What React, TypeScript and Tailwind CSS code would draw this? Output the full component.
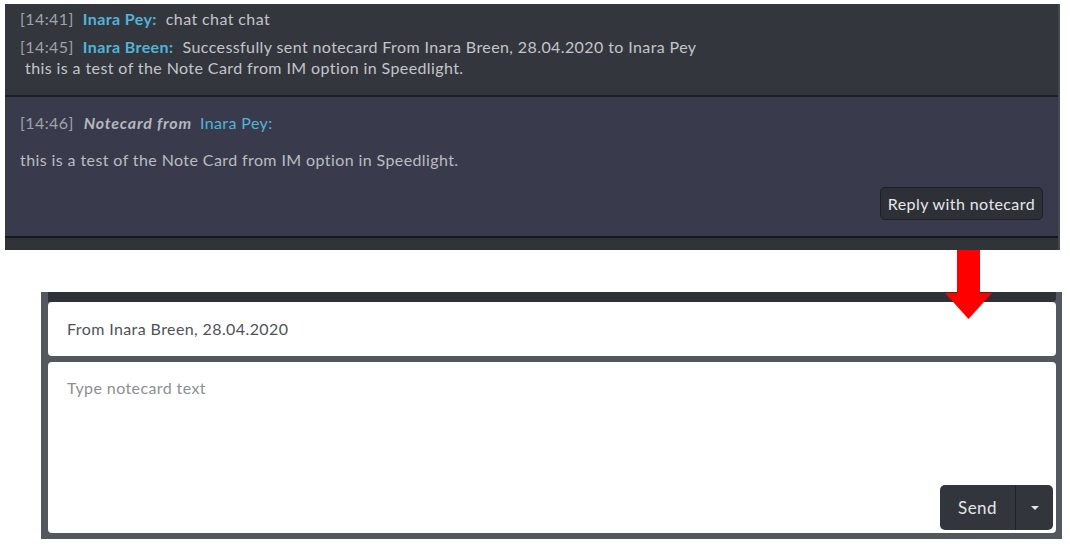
import { ChevronDown } from "lucide-react"

const font = { fontFamily: "Lato, 'Noto Sans', sans-serif" }

function ChatLine({ time, name, children }: { time: string; name: string; children: React.ReactNode }) {
  return (
    <div className="leading-[21px]">
      <span className="text-[#9fa3a8]">[{time}]</span>
      <span className="ml-[9px] font-bold text-[#52b3d9]">{name}:</span>
      <span className="ml-[9px] text-[#c3c5c8]">{children}</span>
    </div>
  )
}

export default function App() {
  return (
    <div className="relative h-[548px] w-[1070px] overflow-hidden bg-white text-[16px] tracking-[0.4px]" style={font}>
      {/* chat history */}
      <div className="ml-[5px] mt-[4px] w-[1055px] border-r-2 border-[#45484e]">
        <div className="flex flex-col gap-[7px] bg-[#33363d] px-[15px] pb-[17px] pt-[4px]">
          <ChatLine time="14:41" name="Inara Pey">chat chat chat</ChatLine>
          <div>
            <ChatLine time="14:45" name="Inara Breen">
              Successfully sent notecard From Inara Breen, 28.04.2020 to Inara Pey
            </ChatLine>
            <div className="pl-[5px] leading-[21px] text-[#c3c5c8]">
              this is a test of the Note Card from IM option in Speedlight.
            </div>
          </div>
        </div>
        <div className="border-t-2 border-[#1d1f24] bg-[#393b4c] px-[15px] pb-[16px] pt-[15px]">
          <div className="leading-[21px]">
            <span className="text-[#9fa3a8]">[14:46]</span>
            <span className="ml-[10px] font-bold italic tracking-[0.8px] text-[#b4b7bc]">Notecard from</span>
            <span className="ml-[8px] text-[#52b3d9]">Inara Pey:</span>
          </div>
          <div className="mt-[16px] leading-[21px] text-[#b9bcc0]">
            this is a test of the Note Card from IM option in Speedlight.
          </div>
          <div className="mt-[17px] flex justify-end">
            <button className="h-[33px] rounded-[5px] border border-[#1d1f24] bg-[#2d3037] px-[7px] text-[16px] text-[#e6e7e8]">
              Reply with notecard
            </button>
          </div>
        </div>
        <div className="h-[14px] border-t-2 border-[#15171a] bg-[#303338]" />
      </div>

      {/* notecard composer */}
      <div className="ml-[41px] mt-[42px] w-[1021px] bg-[#53585e] pb-[6px] pl-[7px] pr-[6px]">
        <div className="h-[10px] rounded-br-[4px] bg-[#2e3136]" />
        <div className="flex h-[54px] items-center rounded-[4px] bg-white px-[19px] text-[#4f5357]">
          From Inara Breen, 28.04.2020
        </div>
        <div className="mt-[6px] flex h-[171px] flex-col rounded-[4px] bg-white px-[19px] pt-[14px]">
          <div className="text-[#8b8f93]">Type notecard text</div>
          <div className="mt-auto mb-[3px] flex justify-end self-end -mr-[16px]">
            <div className="flex h-[45px] overflow-hidden rounded-[5px] bg-[#32353b] text-[#e4e5e6]">
              <button className="w-[76px] border-r border-[#1f2125] text-[17px]">Send</button>
              <button className="flex w-[37px] items-center justify-center">
                <ChevronDown className="hidden" />
                <span className="h-0 w-0 border-x-[4px] border-t-[4px] border-x-transparent border-t-[#e4e5e6]" />
              </button>
            </div>
          </div>
        </div>
      </div>

      {/* red arrow overlay */}
      <svg className="absolute left-[944px] top-[250px]" width="50" height="70" viewBox="0 0 50 70">
        <polygon points="13,0 36,0 36,43 48,43 24.5,69 1,43 13,43" fill="#ff0000" />
      </svg>
    </div>
  )
}
